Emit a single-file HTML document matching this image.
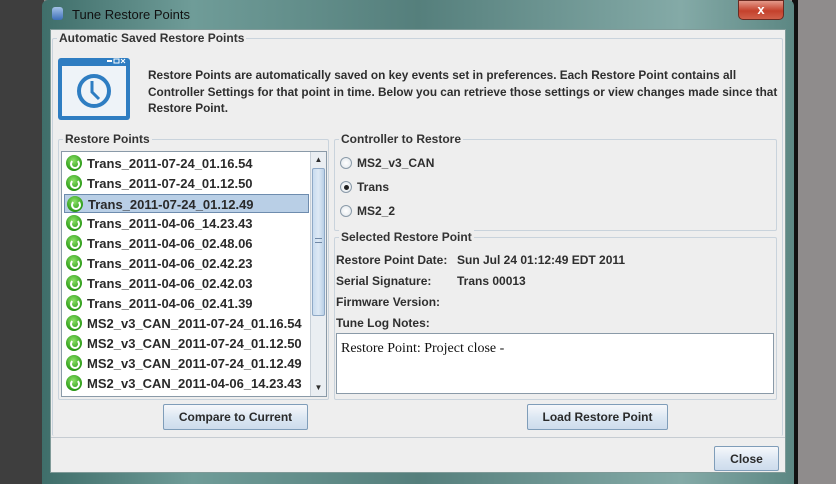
<!DOCTYPE html>
<html><head><style>
*{margin:0;padding:0;box-sizing:border-box}
body{width:836px;height:484px;position:relative;overflow:hidden;background:#8f8c8c;font-family:"Liberation Sans",sans-serif;font-weight:bold;font-size:12px;color:#2e2e2e}
.a{position:absolute}
.t{position:absolute;white-space:nowrap}
.grp{position:absolute;border:1px solid #c9d3dc;border-radius:2px}
.lg{position:absolute;background:#eeeeee;padding:0 2px;top:-8px;left:4px;font-size:12px;color:#333}
.row{position:absolute;left:2px;width:245px;height:19px;line-height:19px;padding-left:23px;font-size:13px;color:#2a2a2a}
.ic{position:absolute;left:2px;top:1px;width:16px;height:16px;border-radius:50%;background:radial-gradient(circle at 45% 35%,#8fe36a,#2a9a16 70%,#1a7a0c)}
.ic:after{content:"";position:absolute;left:4px;top:4px;width:6px;height:6px;border:2px solid #fff;border-top-color:transparent;border-radius:50%}
.btn{position:absolute;border:1px solid #7f9db9;border-radius:2px;background:linear-gradient(#f6f8fb,#dbe6f2 55%,#cddcec);text-align:center;font-size:12px;color:#2a2a2a}
.rad{position:absolute;width:12px;height:12px;border-radius:50%;border:1px solid #8a9aa8;background:radial-gradient(#fff,#dfe5ea)}
</style></head><body>
<div class="a" style="left:0;top:0;width:44px;height:484px;background:#3e3e3e"></div>
<div class="a" style="left:792px;top:0;width:6px;height:484px;background:#111"></div>
<div class="a" style="left:42px;top:0;width:752px;height:484px;background:linear-gradient(90deg,#3f6e6a,#6f9c98 20%,#557f7c 50%,#84aaa7 85%,#5c8783);border-radius:6px 6px 0 0"></div>
<div class="a" style="left:52px;top:7px;width:11px;height:13px;background:linear-gradient(#a5c2e8,#3d6fb8);border-radius:3px"></div>
<div class="t" style="left:72px;top:7px;font-weight:normal;font-size:13px;color:#111">Tune Restore Points</div>
<div class="a" style="left:738px;top:0;width:46px;height:20px;border-radius:0 0 5px 5px;background:linear-gradient(#e49a8a,#c4412c 55%,#d0604a);border:1px solid #6a2b22;color:#fff;text-align:center;line-height:18px;font-size:13px">x</div>
<div class="a" style="left:50px;top:29px;width:736px;height:444px;background:#eeeeee;border:1px solid #7f9a98"></div>

<div class="grp" style="left:52px;top:38px;width:731px;height:398px;border-bottom:none"><div class="lg" style="left:4px">Automatic Saved Restore Points</div></div>
<svg class="a" style="left:57px;top:57px" width="74" height="64" viewBox="0 0 74 64">
<rect x="1" y="1" width="72" height="62" rx="3" fill="#2e7dc2"/>
<rect x="5" y="9" width="64" height="50" fill="#eef3f8"/>
<rect x="50" y="3" width="5" height="2" fill="#fff"/><rect x="57" y="2" width="5" height="4" fill="none" stroke="#fff"/><path d="M64 2l4 4M68 2l-4 4" stroke="#fff"/>
<circle cx="37" cy="34" r="15" fill="none" stroke="#2e7dc2" stroke-width="4"/>
<path d="M35 24v11l7 7" fill="none" stroke="#2e7dc2" stroke-width="3"/>
</svg>
<div class="t" style="left:148px;top:67px;line-height:16.5px;font-size:11.8px">Restore Points are automatically saved on key events set in preferences. Each Restore Point contains all<br>Controller Settings for that point in time. Below you can retrieve those settings or view changes made since that<br>Restore Point.</div>

<div class="grp" style="left:58px;top:139px;width:271px;height:261px"><div class="lg">Restore Points</div></div>
<div class="a" style="left:61px;top:151px;width:266px;height:246px;background:#fff;border:1px solid #8a9aa8">
<div class="row" style="top:2px"><span class="ic"></span>Trans_2011-07-24_01.16.54</div>
<div class="row" style="top:22px"><span class="ic"></span>Trans_2011-07-24_01.12.50</div>
<div class="row" style="top:42px;background:#b9cfe6;border:1px solid #6e8cae"><span class="ic"></span>Trans_2011-07-24_01.12.49</div>
<div class="row" style="top:62px"><span class="ic"></span>Trans_2011-04-06_14.23.43</div>
<div class="row" style="top:82px"><span class="ic"></span>Trans_2011-04-06_02.48.06</div>
<div class="row" style="top:102px"><span class="ic"></span>Trans_2011-04-06_02.42.23</div>
<div class="row" style="top:122px"><span class="ic"></span>Trans_2011-04-06_02.42.03</div>
<div class="row" style="top:142px"><span class="ic"></span>Trans_2011-04-06_02.41.39</div>
<div class="row" style="top:162px"><span class="ic"></span>MS2_v3_CAN_2011-07-24_01.16.54</div>
<div class="row" style="top:182px"><span class="ic"></span>MS2_v3_CAN_2011-07-24_01.12.50</div>
<div class="row" style="top:202px"><span class="ic"></span>MS2_v3_CAN_2011-07-24_01.12.49</div>
<div class="row" style="top:222px"><span class="ic"></span>MS2_v3_CAN_2011-04-06_14.23.43</div>
<div class="a" style="left:248px;top:0;width:16px;height:244px;background:#eaeef2;border-left:1px solid #c8d0d8">
<div class="a" style="left:0;top:0;width:15px;height:15px;font-size:8px;text-align:center;line-height:15px">▲</div>
<div class="a" style="left:1px;top:16px;width:13px;height:148px;background:linear-gradient(90deg,#c9dcef,#dde9f5,#b9cfe6);border:1px solid #8fa9c6;border-radius:2px"></div>
<div class="a" style="left:4px;top:86px;width:7px;height:5px;border-top:1px solid #6f88a6;border-bottom:1px solid #6f88a6"></div>
<div class="a" style="left:0;top:228px;width:15px;height:15px;font-size:8px;text-align:center;line-height:15px">▼</div>
</div>
</div>
<div class="btn" style="left:163px;top:404px;width:145px;height:26px;line-height:25px">Compare to Current</div>

<div class="grp" style="left:334px;top:139px;width:443px;height:92px"><div class="lg">Controller to Restore</div></div>
<div class="rad" style="left:340px;top:157px"></div><div class="t" style="left:357px;top:156px">MS2_v3_CAN</div>
<div class="rad" style="left:340px;top:181px"></div><div class="a" style="left:344px;top:185px;width:5px;height:5px;border-radius:50%;background:#222"></div><div class="t" style="left:357px;top:180px">Trans</div>
<div class="rad" style="left:340px;top:205px"></div><div class="t" style="left:357px;top:204px">MS2_2</div>

<div class="grp" style="left:334px;top:237px;width:443px;height:163px"><div class="lg">Selected Restore Point</div></div>
<div class="t" style="left:336px;top:253px">Restore Point Date:</div><div class="t" style="left:457px;top:253px">Sun Jul 24 01:12:49 EDT 2011</div>
<div class="t" style="left:336px;top:274px">Serial Signature:</div><div class="t" style="left:457px;top:274px">Trans 00013</div>
<div class="t" style="left:336px;top:295px">Firmware Version:</div>
<div class="t" style="left:336px;top:316px">Tune Log Notes:</div>
<div class="a" style="left:336px;top:333px;width:438px;height:61px;background:#fff;border:1px solid #8a9aa8"></div>
<div class="t" style="left:341px;top:341px;font-family:'Liberation Serif',serif;font-weight:normal;font-size:14px;color:#111">Restore Point: Project close -</div>
<div class="btn" style="left:527px;top:404px;width:141px;height:26px;line-height:25px">Load Restore Point</div>

<div class="a" style="left:51px;top:437px;width:734px;height:1px;background:#c6ccd2"></div>
<div class="btn" style="left:714px;top:446px;width:65px;height:25px;line-height:24px">Close</div>
</body></html>
